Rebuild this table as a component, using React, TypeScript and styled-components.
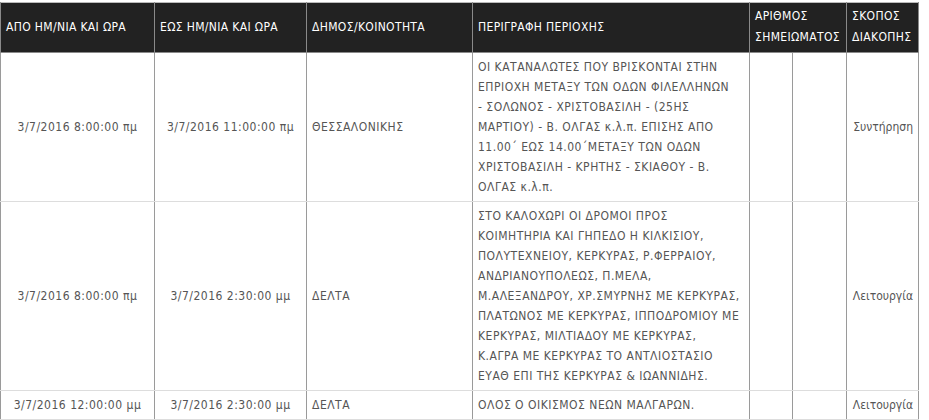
import React from "react";
import styled, { createGlobalStyle } from "styled-components";

const Global = createGlobalStyle`
  body {
    margin: 0;
    background: #fff;
    font-family: "DejaVu Sans Condensed", "DejaVu Sans", Tahoma, sans-serif;
  }
`

const Wrap = styled.div`
  padding: 2px 11px 0 0;
`

const Table = styled.table`
  width: 918px;
  border-collapse: collapse;
  table-layout: fixed;
  font-size: 12px;
  letter-spacing: 0.5px;
  color: #555;
  border-top: 1px solid #bbb;
`

const Head = styled.th`
  background: #222;
  color: #fff;
  font-weight: normal;
  text-align: left;
  vertical-align: middle;
  line-height: 21px;
  letter-spacing: 0.35px;
  padding: 3px 4px 4px 5px;
  height: 42px;
  white-space: nowrap;
  border: 1px solid #8a8a8a;
  border-top: none;
`

const Cell = styled.td<{ $align?: string; $light?: boolean; $tight?: boolean }>`
  text-align: ${p => p.$align || "left"};
  vertical-align: middle;
  line-height: 20px;
  padding: 4px 5px;
  white-space: nowrap;
  letter-spacing: ${p => (p.$tight ? "0" : "0.5px")};
  border-left: 1px solid ${p => (p.$light ? "#ddd" : "#9a9a9a")};
  border-right: 1px solid #9a9a9a;
  border-bottom: 1px solid #ddd;
`

const Line = styled.span`
  display: block;
`

type Row = {
    from: string;
    to: string;
    area: string;
    desc: string[];
    reason: string;
}

const rows: Row[] = [
    {
        from: "3/7/2016 8:00:00 πμ",
        to: "3/7/2016 11:00:00 πμ",
        area: "ΘΕΣΣΑΛΟΝΙΚΗΣ",
        desc: [
            "ΟΙ ΚΑΤΑΝΑΛΩΤΕΣ ΠΟΥ ΒΡΙΣΚΟΝΤΑΙ ΣΤΗΝ",
            "ΕΠΡΙΟΧΗ ΜΕΤΑΞΥ ΤΩΝ ΟΔΩΝ ΦΙΛΕΛΛΗΝΩΝ",
            "- ΣΟΛΩΝΟΣ - ΧΡΙΣΤΟΒΑΣΙΛΗ - (25ΗΣ",
            "ΜΑΡΤΙΟΥ) - Β. ΟΛΓΑΣ κ.λ.π. ΕΠΙΣΗΣ ΑΠΟ",
            "11.00΄ ΕΩΣ 14.00΄ΜΕΤΑΞΥ ΤΩΝ ΟΔΩΝ",
            "ΧΡΙΣΤΟΒΑΣΙΛΗ - ΚΡΗΤΗΣ - ΣΚΙΑΘΟΥ - Β.",
            "ΟΛΓΑΣ κ.λ.π.",
        ],
        reason: "Συντήρηση",
    },
    {
        from: "3/7/2016 8:00:00 πμ",
        to: "3/7/2016 2:30:00 μμ",
        area: "ΔΕΛΤΑ",
        desc: [
            "ΣΤΟ ΚΑΛΟΧΩΡΙ ΟΙ ΔΡΟΜΟΙ ΠΡΟΣ",
            "ΚΟΙΜΗΤΗΡΙΑ ΚΑΙ ΓΗΠΕΔΟ Η ΚΙΛΚΙΣΙΟΥ,",
            "ΠΟΛΥΤΕΧΝΕΙΟΥ, ΚΕΡΚΥΡΑΣ, Ρ.ΦΕΡΡΑΙΟΥ,",
            "ΑΝΔΡΙΑΝΟΥΠΟΛΕΩΣ, Π.ΜΕΛΑ,",
            "Μ.ΑΛΕΞΑΝΔΡΟΥ, ΧΡ.ΣΜΥΡΝΗΣ ΜΕ ΚΕΡΚΥΡΑΣ,",
            "ΠΛΑΤΩΝΟΣ ΜΕ ΚΕΡΚΥΡΑΣ, ΙΠΠΟΔΡΟΜΙΟΥ ΜΕ",
            "ΚΕΡΚΥΡΑΣ, ΜΙΛΤΙΑΔΟΥ ΜΕ ΚΕΡΚΥΡΑΣ,",
            "Κ.ΑΓΡΑ ΜΕ ΚΕΡΚΥΡΑΣ ΤΟ ΑΝΤΛΙΟΣΤΑΣΙΟ",
            "ΕΥΑΘ ΕΠΙ ΤΗΣ ΚΕΡΚΥΡΑΣ & ΙΩΑΝΝΙΔΗΣ.",
        ],
        reason: "Λειτουργία",
    },
    {
        from: "3/7/2016 12:00:00 μμ",
        to: "3/7/2016 2:30:00 μμ",
        area: "ΔΕΛΤΑ",
        desc: ["ΟΛΟΣ Ο ΟΙΚΙΣΜΟΣ ΝΕΩΝ ΜΑΛΓΑΡΩΝ."],
        reason: "Λειτουργία",
    },
]

export default function App() {
    return (
        <Wrap>
            <Global/>
            <Table>
                <colgroup>
                    <col style={{width: 154}}/>
                    <col style={{width: 152}}/>
                    <col style={{width: 166}}/>
                    <col style={{width: 277}}/>
                    <col style={{width: 43}}/>
                    <col style={{width: 54}}/>
                    <col style={{width: 72}}/>
                </colgroup>
                <thead>
                <tr>
                    <Head>ΑΠΟ ΗΜ/ΝΙΑ ΚΑΙ ΩΡΑ</Head>
                    <Head>ΕΩΣ ΗΜ/ΝΙΑ ΚΑΙ ΩΡΑ</Head>
                    <Head>ΔΗΜΟΣ/ΚΟΙΝΟΤΗΤΑ</Head>
                    <Head>ΠΕΡΙΓΡΑΦΗ ΠΕΡΙΟΧΗΣ</Head>
                    <Head colSpan={2}>ΑΡΙΘΜΟΣ<br/>ΣΗΜΕΙΩΜΑΤΟΣ</Head>
                    <Head>ΣΚΟΠΟΣ<br/>ΔΙΑΚΟΠΗΣ</Head>
                </tr>
                </thead>
                <tbody>
                {rows.map((r, i) => (
                    <tr key={i}>
                        <Cell $align="center">{r.from}</Cell>
                        <Cell $align="center">{r.to}</Cell>
                        <Cell>{r.area}</Cell>
                        <Cell>{r.desc.map((l, j) => <Line key={j}>{l}</Line>)}</Cell>
                        <Cell/>
                        <Cell $light/>
                        <Cell $align="right" $tight>{r.reason}</Cell>
                    </tr>
                ))}
                </tbody>
            </Table>
        </Wrap>
    );
}
